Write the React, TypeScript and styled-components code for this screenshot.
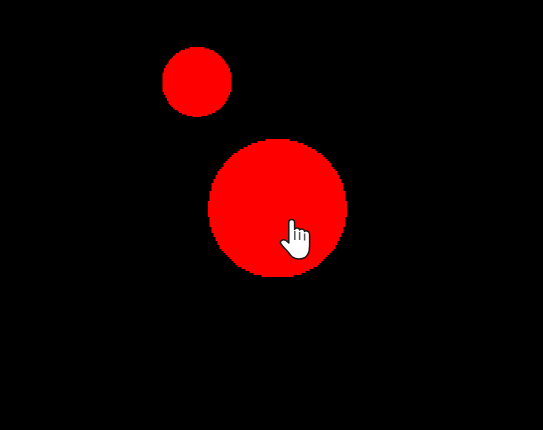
import React from "react";
import styled, { createGlobalStyle } from "styled-components";

const GlobalStyle = createGlobalStyle`
  html, body {
    margin: 0;
    padding: 0;
    background: #000;
  }
`;

const Canvas = styled.div`
  position: relative;
  width: 543px;
  height: 430px;
  background-color: #000;
  overflow: hidden;
`;

const DiscShape = styled.svg<{ $x: number; $y: number; $size: number }>`
  position: absolute;
  left: ${(p) => p.$x}px;
  top: ${(p) => p.$y}px;
  width: ${(p) => p.$size}px;
  height: ${(p) => p.$size}px;
  filter: blur(0.5px);
`;

const Pointer = styled.svg`
  position: absolute;
  left: 278px;
  top: 216px;
  width: 36px;
  height: 46px;
  filter: blur(0.4px);
`;

// the discs in the picture are low-res, so their edge goes in small stairs
const stairOutline = (size: number, step: number) => {
  const r = size / 2;
  const right: string[] = [];
  const left: string[] = [];
  for (let y = 0; y < size; y += step) {
    const mid = Math.min(y + step / 2, size) - r;
    const half = Math.round(Math.sqrt(Math.max(r * r - mid * mid, 0)) / step) * step;
    const bottom = Math.min(y + step, size);
    right.push(`L${r + half} ${y}L${r + half} ${bottom}`);
    left.unshift(`L${r - half} ${bottom}L${r - half} ${y}`);
  }
  return `M${r} 0${right.join("")}${left.join("")}Z`;
};

const Disc = ({ x, y, size, step }: { x: number; y: number; size: number; step: number }) => (
  <DiscShape $x={x} $y={y} $size={size} viewBox={`0 0 ${size} ${size}`}>
    <path d={stairOutline(size, step)} fill="#ff0000" />
  </DiscShape>
);

const HandCursor = () => (
  <Pointer viewBox="0 0 36 46">
    <path
      d="M10.8 6C10.8 2.8 16.6 2.8 16.6 6V13.5C17 11.5 21.2 11.5 21.6 14C22 12.5 26.2 12.5 26.6 15.5C27 14.5 31.2 14.5 31.6 18V30C31.6 38 28 43 21 43C15 43 13 40 10.5 36.5C8 33.5 5 31 3 28C1 25 5 22.5 8 24.5L10.8 27Z"
      fill="#fff"
      stroke="#1a1a1a"
      strokeWidth="1.5"
      strokeLinejoin="round"
    />
    <path d="M16.8 15V24M21.6 16V24M26.6 17.5V24.5" stroke="#555" strokeWidth="1.5" fill="none" />
  </Pointer>
);

const App = () => {
  return (
    <Canvas>
      <GlobalStyle />
      <Disc x={162} y={47} size={70} step={1.5} />
      <Disc x={208} y={139} size={139} step={2} />
      <HandCursor />
    </Canvas>
  );
};

export default App;
